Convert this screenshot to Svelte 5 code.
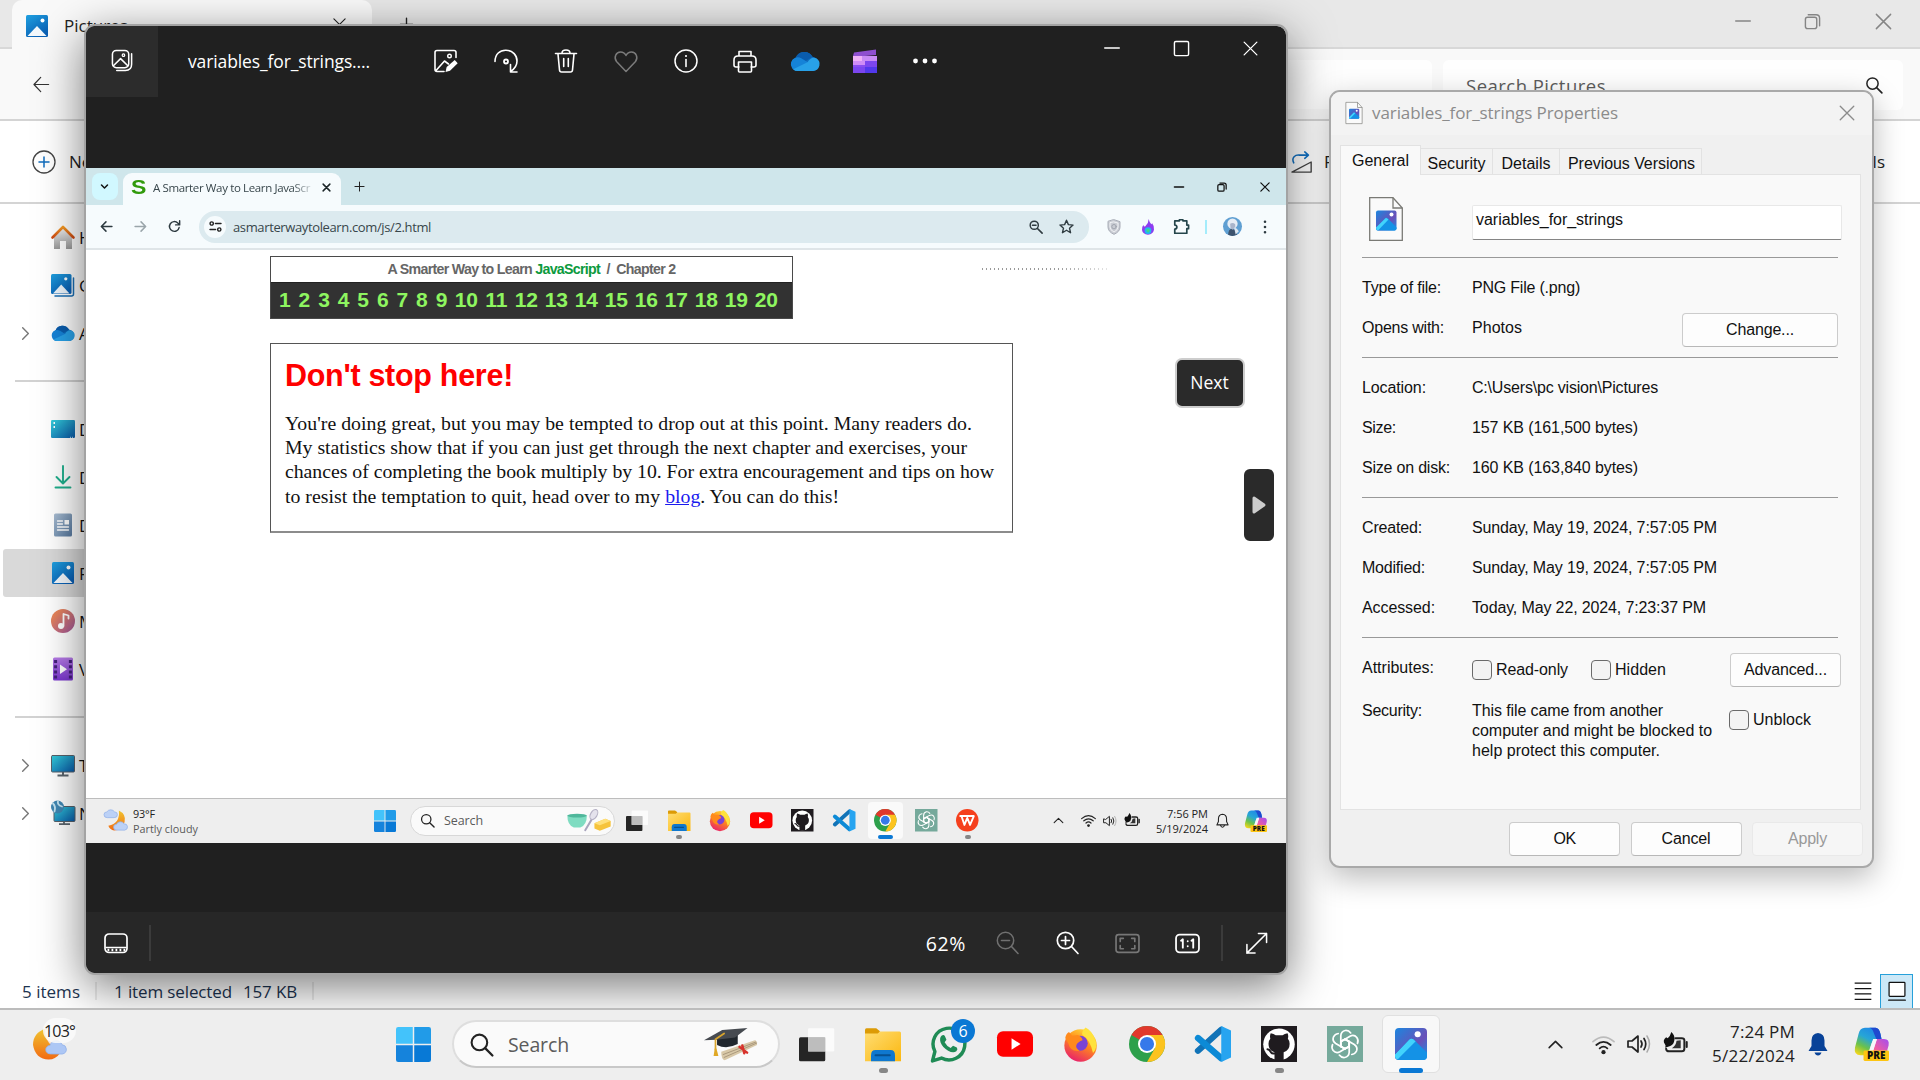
<script>
  // Spreads letter spacing so that a label takes its design width in any fallback font.
  function fit(node, width) {
    const range = document.createRange();
    range.selectNodeContents(node);
    const natural = range.getBoundingClientRect().width;
    const count = node.textContent.length;
    if (count > 0) node.style.letterSpacing = `${(width - natural) / count}px`;
  }

  const sidebar = [
    { icon: 'home', label: 'Home' },
    { icon: 'gallery', label: 'Gallery' },
    { icon: 'cloud', label: 'Aisha - Personal', expand: true },
    { rule: true },
    { icon: 'desktop', label: 'Desktop' },
    { icon: 'download', label: 'Downloads' },
    { icon: 'document', label: 'Documents' },
    { icon: 'picture', label: 'Pictures', active: true },
    { icon: 'music', label: 'Music' },
    { icon: 'video', label: 'Videos' },
    { rule: true },
    { icon: 'pc', label: 'This PC', expand: true },
    { icon: 'network', label: 'Network', expand: true }
  ];

  const photoTools = ['edit', 'rotate', 'trash', 'heart', 'info', 'print', 'cloud', 'clip', 'dots'];
  const chapters = Array.from({ length: 20 }, (_, i) => i + 1);
  const lessonLines = [
    { text: "You're doing great, but you may be tempted to drop out at this point. Many readers do.", width: 687 },
    { text: 'My statistics show that if you can just get through the next chapter and exercises, your', width: 682 },
    { text: 'chances of completing the book multiply by 10. For extra encouragement and tips on how', width: 709 }
  ];
  const innerApps = [
    { icon: 'taskview' },
    { icon: 'folder', open: true },
    { icon: 'firefox' },
    { icon: 'youtube' },
    { icon: 'github' },
    { icon: 'vscode' },
    { icon: 'chrome', active: true },
    { icon: 'gpt' },
    { icon: 'wps', open: true }
  ];
  const apps = [
    { icon: 'taskview' },
    { icon: 'folder', open: true },
    { icon: 'whatsapp', badge: '6' },
    { icon: 'youtube' },
    { icon: 'firefox' },
    { icon: 'chrome' },
    { icon: 'vscode' },
    { icon: 'github', open: true },
    { icon: 'gpt' },
    { icon: 'photos', active: true }
  ];
  const details = [
    [
      { label: 'Type of file:', lw: 79, value: 'PNG File (.png)', vw: 108 },
      { label: 'Opens with:', lw: 82, value: 'Photos', vw: 50, button: 'Change...' }
    ],
    [
      { label: 'Location:', lw: 64, value: 'C:\\Users\\pc vision\\Pictures', vw: 186 },
      { label: 'Size:', lw: 34, value: '157 KB (161,500 bytes)', vw: 166 },
      { label: 'Size on disk:', lw: 88, value: '160 KB (163,840 bytes)', vw: 166 }
    ],
    [
      { label: 'Created:', lw: 60, value: 'Sunday, May 19, 2024, 7:57:05 PM', vw: 245 },
      { label: 'Modified:', lw: 63, value: 'Sunday, May 19, 2024, 7:57:05 PM', vw: 245 },
      { label: 'Accessed:', lw: 73, value: 'Today, May 22, 2024, 7:23:37 PM', vw: 234 }
    ]
  ];
</script>

{#snippet icon(name, size = 24)}
  <svg class="icon" width={size} height={size} viewBox="0 0 24 24" fill="none" stroke-linecap="round" stroke-linejoin="round">
    {#if name === 'home'}
      <path d="M3 12 12 4l9 8v12h-6v-8H9v8H3z" fill="url(#g-grey)" />
      <path d="M1.500 12.500 12 2l10.500 10.500" stroke="url(#g-orange)" stroke-width="2.600" />
    {:else if name === 'gallery'}
      <path d="M22.500 5v16q0 2-2 2H4" stroke="#1a6fb5" stroke-width="1.500" />
      <rect x="0" y="1" width="20.500" height="20" rx="1.500" fill="url(#g-pic)" />
      <path d="M2 20.500 10.200 11.500 18.500 20.500z" fill="#eef6fc" />
      <circle cx="14.800" cy="5.800" r="1.600" fill="#fff" />
    {:else if name === 'picture'}
      <rect x="1" y="1" width="22" height="22" rx="1.500" fill="url(#g-pic)" />
      <path d="M2.500 22 12 12l9.500 10z" fill="#f3f8fc" />
      <circle cx="17.500" cy="6.500" r="2" fill="#fff" />
    {:else if name === 'cloud'}
      <path d="M6 20a5.500 5.500 0 0 1-1.500-10.500A7.500 7.500 0 0 1 18 8.500 6 6 0 0 1 19 20z" fill="#0f6cbd" />
      <path d="M4.500 9.500a7.500 7.500 0 0 1 13.500-1l-8 5z" fill="#0a5cad" />
      <path d="M6 20a5.500 5.500 0 1 1 3-10.200L16 14 6 20z" fill="#1583d8" />
      <path d="M2.500 18.500 14 13q3-5 7-3.200A5.500 5.500 0 0 1 18.500 20H6q-2 0-3.500-1.500z" fill="#28a1e8" />
    {:else if name === 'desktop'}
      <rect x="0" y="3" width="24" height="18" rx="1.200" fill="url(#g-teal)" />
      <path d="M2.500 6h1.500M2.500 10h1.500" stroke="#fff" stroke-width="2" stroke-linecap="butt" />
      <path d="M19 20.300h4" stroke="#bfe6f5" stroke-width="1" stroke-dasharray="1 1" stroke-linecap="butt" />
    {:else if name === 'download'}
      <path d="M12 1v17M5.500 12 12 18.500 18.500 12M4.500 22.500h15" stroke="#1fae8b" stroke-width="1.900" />
    {:else if name === 'document'}
      <rect x="3" y="0.500" width="18" height="23" rx="1.500" fill="url(#g-doc)" />
      <path d="M6.500 8h5M6.500 11h5M6.500 14h11M6.500 17h11" stroke="#fff" stroke-width="1.300" />
      <rect x="13.500" y="7" width="4.500" height="4.500" fill="#fff" />
    {:else if name === 'music'}
      <circle cx="12" cy="12" r="12" fill="url(#g-music)" />
      <circle cx="10" cy="17" r="3" fill="#fff" />
      <path d="M12.500 17V5l5 1.500v3" stroke="#fff" stroke-width="1.800" />
    {:else if name === 'video'}
      <rect x="2" y="0.500" width="20" height="23" rx="1.500" fill="url(#g-video)" />
      <path d="M4.600 3v19M19.400 3v19" stroke="#43207a" stroke-width="3" stroke-dasharray="3 2.200" stroke-linecap="butt" />
      <path d="M9 7.500v9.500l7-4.700z" fill="#fff" />
    {:else if name === 'pc'}
      <rect x="0.500" y="2.500" width="23" height="16.500" rx="1" fill="url(#g-teal)" stroke="#58616a" />
      <path d="M12 19v2.500M6.500 22.500h11" stroke="#5a646c" stroke-width="2" stroke-linecap="butt" />
    {:else if name === 'network'}
      <rect x="3" y="5.500" width="21" height="15" rx="1" fill="url(#g-teal)" stroke="#58616a" />
      <path d="M13 20v2.500M8 23.200h11" stroke="#5a646c" stroke-width="1.800" stroke-linecap="butt" />
      <circle cx="6.500" cy="6" r="6.500" fill="#3f87b3" />
      <path d="M2 2.500q3 3 1.500 8M7 0q-1 4 4 5.500" stroke="#c4e4f2" stroke-width="1.800" />
    {:else if name === 'back'}
      <path d="M21 12H3M11 3 2.500 12l8.500 9" stroke="#333" stroke-width="1.500" />
    {:else if name === 'chevron'}
      <path d="m8 4 8 8-8 8" stroke="#777" stroke-width="2" />
    {:else if name === 'up'}
      <path d="m4 16 8-8 8 8" stroke="#222" stroke-width="2" />
    {:else if name === 'newitem'}
      <circle cx="12" cy="12" r="11" stroke="#444" stroke-width="1.300" />
      <path d="M12 7v10M7 12h10" stroke="#0f6cbd" stroke-width="1.500" />
    {:else if name === 'x'}
      <path d="m3 3 18 18M21 3 3 21" stroke="currentColor" stroke-width="1.800" />
    {:else if name === 'xbold'}
      <path d="m3 3 18 18M21 3 3 21" stroke="#1c2528" stroke-width="4" />
    {:else if name === 'plus'}
      <path d="M12 2v20M2 12h20" stroke="currentColor" stroke-width="2.200" />
    {:else if name === 'min'}
      <path d="M1 12h22" stroke="currentColor" stroke-width="1.900" />
    {:else if name === 'max'}
      <rect x="2" y="2" width="20" height="20" rx="2" stroke="currentColor" stroke-width="2" />
    {:else if name === 'restore'}
      <rect x="2" y="6" width="16" height="16" rx="3" stroke="currentColor" stroke-width="2" />
      <path d="M6 2.500h11q5 0 5 5V18" stroke="currentColor" stroke-width="2" />
    {:else if name === 'cmin'}
      <path d="M1 12h22" stroke="#111" stroke-width="3.600" />
    {:else if name === 'crestore'}
      <rect x="2" y="6" width="15" height="16" rx="3" stroke="#111" stroke-width="3" />
      <path d="M7 2.500h10q5 0 5 5V17" stroke="#111" stroke-width="3" />
    {:else if name === 'cx'}
      <path d="m2 2 20 20M22 2 2 22" stroke="#111" stroke-width="2.900" />
    {:else if name === 'search'}
      <circle cx="10" cy="10" r="7.500" stroke="#222" stroke-width="2" />
      <path d="m15.500 15.500 7 7" stroke="#222" stroke-width="2.200" />
    {:else if name === 'zoomout'}
      <circle cx="10.500" cy="9.500" r="8.200" stroke="currentColor" stroke-width="1.500" />
      <path d="m16.500 15.500 6.500 7M6.500 9.500h8" stroke="currentColor" stroke-width="1.600" />
    {:else if name === 'czoom'}
      <circle cx="9" cy="9" r="7" stroke="currentColor" stroke-width="2.500" />
      <path d="m14.500 14.500 8 8M6 9h6" stroke="currentColor" stroke-width="2.800" />
    {:else if name === 'zoomin'}
      <circle cx="10.500" cy="9.500" r="8.200" stroke="currentColor" stroke-width="1.700" />
      <path d="m16.500 15.500 6.500 7M6.500 9.500h8M10.500 5.500v8" stroke="currentColor" stroke-width="1.700" />
    {:else if name === 'rotateimg'}
      <path d="M3 13C0 7 5 4 9 4.500h10M15 1l4 3.500L15 8" stroke="#1272c4" stroke-width="1.700" />
      <path d="M1 23 22 12v11z" stroke="#444" stroke-width="1.500" />
    {:else if name === 'photoset'}
      <rect x="1.500" y="1.500" width="17" height="18" rx="4" stroke="#fff" stroke-width="1.600" />
      <path d="M2.500 17.500 10 10l7.500 7.500M21.500 5v11q0 6.500-6.500 6.500H6" stroke="#fff" stroke-width="1.600" />
      <circle cx="13" cy="6.500" r="1.300" stroke="#fff" stroke-width="1.300" />
    {:else if name === 'edit'}
      <path d="M10 22.500H3q-2 0-2-2v-17q0-2 2-2h17q2 0 2 2v5M2 21.500l8.500-9.500 4 3" stroke="#fff" stroke-width="1.600" />
      <circle cx="15.500" cy="7" r="1.800" stroke="#fff" stroke-width="1.400" />
      <path d="m11.500 23 1.200-5 8-7 3 3.200-7.700 7.600z" fill="#fff" />
    {:else if name === 'rotate'}
      <path d="M1 12.500C1 5 6 1 12 1.200 19 1.500 23 6.500 23 12c0 4.500-2.500 8-6.500 10.500M16.500 15.500v7.500H23" stroke="#fff" stroke-width="1.600" />
      <circle cx="12" cy="12.500" r="2" stroke="#fff" stroke-width="1.800" />
    {:else if name === 'trash'}
      <path d="M1.500 4.500h21M8 4Q8 1 12 1t4 3M4 5l1.500 16q.200 2 2 2h9q1.800 0 2-2L20 5M9.700 9.500v8M14.300 9.500v8" stroke="#fff" stroke-width="1.600" />
    {:else if name === 'heart'}
      <path d="M12 22.500 2.500 12.500C-.5 8.500 2 3 6.500 3 9 3 11 4.500 12 6.500 13 4.500 15 3 17.500 3 22 3 24.500 8.500 21.500 12.500z" stroke="#7b7b7b" stroke-width="1.500" />
    {:else if name === 'info'}
      <circle cx="12" cy="12" r="11" stroke="#fff" stroke-width="1.500" />
      <path d="M12 10.500v7" stroke="#fff" stroke-width="1.600" />
      <circle cx="12" cy="7" r="1.100" fill="#fff" />
    {:else if name === 'print'}
      <path d="M6 7V2.500h12V7M6 18H3q-2 0-2-2v-5q0-4 4-4h14q4 0 4 4v5q0 2-2 2h-3M5.500 13h13v9q0 1-1 1h-11q-1 0-1-1z" stroke="#fff" stroke-width="1.600" />
    {:else if name === 'clip'}
      <path d="M0 7 1 3.500 23 .5v5.500L1 8z" fill="#8e4fd0" />
      <rect x="0" y="7" width="24" height="17" rx="1" fill="#8a4df0" />
      <path d="M0 7h24v5H0z" fill="#c88bf5" />
      <path d="M0 7h9v5H0z" fill="#efb1f7" />
      <path d="M0 12h12v4H0z" fill="#cf8df6" />
      <path d="M12 12h12v6H12zM0 18h12v6H0z" fill="#7c46ef" />
      <path d="M12 18h12v6H12z" fill="#5238ec" />
    {:else if name === 'dots'}
      <circle cx="2.500" cy="12" r="2.400" fill="#fff" />
      <circle cx="12" cy="12" r="2.400" fill="#fff" />
      <circle cx="21.500" cy="12" r="2.400" fill="#fff" />
    {:else if name === 'vdots'}
      <path d="M12 3v.1M12 12v.1M12 21v.1" stroke="#2d3a40" stroke-width="4.500" />
    {:else if name === 'down'}
      <path d="m4 8 8 8 8-8" stroke="#111" stroke-width="4" />
    {:else if name === 'cback'}
      <path d="M22 12H3M11 3.500 2.500 12l8.500 8.500" stroke="currentColor" stroke-width="2.800" />
    {:else if name === 'cforward'}
      <path d="M2 12h19M13 3.500l8.500 8.500-8.500 8.500" stroke="currentColor" stroke-width="2.800" />
    {:else if name === 'reload'}
      <path d="M20.500 14A9 9 0 1 1 18 5.500L21 8M21.500 1.500V9H14" stroke="#2d3a40" stroke-width="2.700" />
    {:else if name === 'tune'}
      <path d="M12 6.500h10M2 17.500h10" stroke="#222" stroke-width="3" />
      <circle cx="5" cy="6.500" r="3" stroke="#222" stroke-width="2.600" />
      <circle cx="19" cy="17.500" r="3" stroke="#222" stroke-width="2.600" />
    {:else if name === 'star'}
      <path d="m12 2 3 7 7.500.700-5.700 5 1.700 7.300-6.500-4-6.500 4 1.700-7.300-5.700-5L9 9z" stroke="#2f3b40" stroke-width="2.200" />
    {:else if name === 'shield'}
      <path d="M12 1 21 4v8q0 7-9 11-9-4-9-11V4z" fill="#c9ccd3" stroke="#a9adb7" stroke-width="1.500" />
      <path d="M12 4.500 18 6v6q0 4.500-6 7.500-6-3-6-7.500V6z" stroke="#f6f7f9" stroke-width="1.300" />
      <circle cx="12" cy="11.500" r="3.300" stroke="#9da1ab" stroke-width="1.400" />
    {:else if name === 'flame'}
      <path d="M13 0q1 5 4 8 1 0 1-2 4 5 3 10-1.500 7-9 7.500Q4 23 3 16.500 2.500 12 5 9q1 3 3 2 5-5 5-11z" fill="#8d3df0" />
      <circle cx="12" cy="17.500" r="5" fill="#24b7ee" />
      <path d="M10 15q3-1 5 1l-2 4q-4 0-3-5z" fill="#3ddc84" />
    {:else if name === 'puzzle'}
      <path d="M2.500 4H9V2.500h5V4h5.500v6H22v5h-2.500v6.500h-17v-6q3 0 3-2.800t-3-2.700z" stroke="#24454b" stroke-width="2.400" />
    {:else if name === 'avatar'}
      <circle cx="12" cy="12" r="12" fill="#5f9fd2" />
      <circle cx="12" cy="8.500" r="6.500" fill="#e6edf5" />
      <path d="M6.500 22.500Q7 14 12 15t6 7q-6 3.500-11.500.5z" fill="#3d536e" />
      <path d="M9 8.500q4-2 6.500 1v4L12 16l-2.500-2z" fill="#a9b5cb" />
      <path d="M14 13q4 1 6 5l-4 4z" fill="#dfe8f2" />
    {:else if name === 'weather'}
      <path d="M15.500 1.500q8 4 6 12-2.500 8.500-11 9-4-.5-6-5Q17 15 15.500 1.500z" fill="url(#g-moon)" />
      <path d="M3 9a3 3 0 0 1 0-6 4.800 4.800 0 0 1 8 0 3 3 0 0 1 0 6z" fill="#bcd1f6" stroke="#93b2ea" stroke-width=".8" />
      <path d="M13 22a3 3 0 0 1 0-6 4.500 4.500 0 0 1 8-.500A3.300 3.300 0 0 1 22 22z" fill="#bcd1f6" stroke="#93b2ea" stroke-width=".8" />
    {:else if name === 'moon'}
      <path d="M9 1C3 3 0 7 0 12.500 1 19 5 23 11 23q5 0 8.500-5L13 5z" fill="url(#g-moon)" />
      <path d="M8.500 1.500q7.500 2.500 12 12L14 14Q8 9 8.500 1.500z" fill="#fbe3cf" />
      <path d="M12 19a3 3 0 0 1 0-6 4.500 4.500 0 0 1 8.500-.500A3.300 3.300 0 0 1 21 19z" fill="#adc7f5" stroke="#93b2ea" stroke-width=".6" />
    {:else if name === 'start'}
      <path d="M1.500 0H11.500V11.500H0V1.500Q0 0 1.500 0z" fill="#43c3fb" />
      <path d="M12.500 0h10Q24 0 24 1.500v10H12.500z" fill="#219be8" />
      <path d="M0 12.500h11.500V24h-10Q0 24 0 22.500z" fill="#1583dc" />
      <path d="M12.500 12.500H24v10q0 1.500-1.500 1.500h-10z" fill="#0879d6" />
    {:else if name === 'taskview'}
      <rect x="0" y="7.500" width="17.500" height="16" rx="1" fill="#252525" />
      <rect x="6" y="1.500" width="17.500" height="15.500" rx=".8" fill="#fff" fill-opacity=".75" />
      <path d="M6 7.500h11.500v9.500H6z" fill="#bdbdbd" />
    {:else if name === 'folder'}
      <path d="M0 2.500q0-1 1-1h6.500l2.500 2-2 3.500H0z" fill="#dc9b06" />
      <path d="M0 5h8.500l1.500-1.300h13q1 0 1 1V23.500H0z" fill="url(#g-folder)" />
      <path d="M4 23.500v-4Q4 16 7 16h10q3 0 3 3.500v4z" fill="#0f78cf" />
      <path d="M7 19.500h9.500" stroke="#075091" stroke-width="1.300" />
    {:else if name === 'firefox'}
      <circle cx="11.700" cy="13" r="10.800" fill="url(#g-fox)" />
      <path d="M15 1q4 2 6 7 3 6-1 10-2-9-7-12-1-2 2-5z" fill="#ffe23d" />
      <circle cx="11.500" cy="11.500" r="5" fill="#7a43d6" />
      <path d="M1.500 8Q2 5 4 4l2 2.500 4-.5q3 1.500 3 3.500-3 1-4 3-1 2 2 4-6 1-7.500-5z" fill="#ff8a1c" />
    {:else if name === 'youtube'}
      <rect x="0" y="3.500" width="24" height="17" rx="4" fill="#f00" />
      <path d="M9.700 8.200v7.600l6-3.800z" fill="#fff" />
    {:else if name === 'github'}
      <path d="M0 0h24v24H0z" fill="#1f1b1f" />
      <circle cx="12" cy="12.200" r="10.500" fill="#fff" />
      <path d="M9 23V17.500q-4-1.300-4-5.700 0-2 1.200-3.300-.5-2 .3-3.700 2 .2 3.300 1.300h4.600Q15.700 5 17.700 4.800q.8 1.700.2 3.700 1.200 1.300 1.200 3.300 0 4.400-4 5.700v5.500z" fill="#1f1b1f" />
      <path d="M4.300 15.500q1.300 0 2 1.500.900 1.700 2.700 1.300" stroke="#1f1b1f" stroke-width="1.300" />
    {:else if name === 'vscode'}
      <path d="m2 16.500 15.500-14" stroke="#1173b7" stroke-width="4.200" />
      <path d="m2 8 15.500 13.500" stroke="#0c8ad6" stroke-width="4.200" />
      <path d="M17.500 0 24 3v18l-6.500 3z" fill="#27a4f0" />
    {:else if name === 'chrome'}
      <circle cx="12" cy="12" r="12" fill="#2da04b" />
      <path d="M12 12 1.600 6A12 12 0 0 1 22.400 6z" fill="#e1382c" />
      <path d="M12 6h10.400A12 12 0 0 1 12 24l5.200-9z" fill="#fcc31e" />
      <circle cx="12" cy="12" r="6" fill="#fff" />
      <circle cx="12" cy="12" r="4.700" fill="#3579ea" />
    {:else if name === 'gpt'}
      <path d="M0 0h24v24H0z" fill="#75a99b" />
      {#each [0, 60, 120, 180, 240, 300] as turn}
        <path d="M12 8.800 9.200 10.400V6.500q.2-3 3-3.500 2.300-.2 3.600 1.600M9.200 10.400v3.200l2.800 1.600" transform="rotate({turn} 12 12)" stroke="#fff" stroke-width="1.150" />
      {/each}
    {:else if name === 'wps'}
      <circle cx="12" cy="12" r="12" fill="#f5401d" />
      <path d="M4.500 7.500h10M6 8l3 9 3-7.500 3 7.500 4-9.500h-3.500" stroke="#fff" stroke-width="2" />
    {:else if name === 'whatsapp'}
      <path d="M1 23.300 2.600 17A10.600 10.600 0 1 1 7 21.400z" stroke="#1f8b55" stroke-width="2.300" />
      <path d="M7 6.500q1.500-1 2.300.300l1 2.400-1.200 1.700q1.300 2.600 4 3.800l1.600-1.500 2.500 1.200q1 1-.3 2.400-2 1.600-5.500-.3-3.600-2-5-5.500-.900-3 .6-4.500z" fill="#1f8b55" />
    {:else if name === 'photos'}
      <rect x="0" y="0" width="24" height="24" rx="3" fill="url(#g-photos)" />
      <path d="M0 20 10.500 9q2-2 4 0L24 18.500V21q0 3-3 3H3q-3 0-3-3z" fill="#1492e6" />
      <path d="M2 23.500Q0 23 0 20L10.500 9q2-2 4.500.500-1.500-.500-3 1z" fill="#42d3fc" />
      <path d="M2 23.500 14 11.500l1.500-1.500-3.500-2L0 20q0 2.500 2 3.500z" fill="#42d3fc" />
      <circle cx="17" cy="4.700" r="2.300" fill="#fff" />
    {:else if name === 'cap'}
      <path d="M6.800 9v3.500q5 2.500 10.800-.500V6.500z" fill="#20262c" />
      <path d="M0 10 9.500 4.700 22.700 3.700 16.200 8.600 6.500 9.800z" fill="#464a50" />
      <path d="M10.500 6.500 6 9.500V15" stroke="#d9a42c" stroke-width=".9" />
      <path d="m5 18.300.600-4h.9l1 4z" fill="#e0a825" />
      <path d="m9 16 17.500-6q1.200 0 1.200 2.500L10.800 20.500Q9 20 9 16z" fill="#d8c8a8" />
      <path d="m10 17.500 17-6.500M10.500 19l17-7.500" stroke="#a8977a" stroke-width=".5" />
      <path d="m18.500 13.500 4 3M20 12.800l1 4" stroke="#d8322c" stroke-width="1.300" />
    {:else if name === 'baking'}
      <path d="M-8 7H10q0 9-6 11H-2q-6-2-6-11z" fill="#7fdcc1" />
      <ellipse cx="1" cy="7" rx="9" ry="1.800" fill="#4fb79b" />
      <path d="m8.500 20.500 6-10" stroke="#a9a4bd" stroke-width="1.800" />
      <ellipse cx="16.500" cy="6" rx="3" ry="5" transform="rotate(30 16.500 6)" fill="#e4e2ec" stroke="#b4b0c4" />
      <path d="m17 14 10-4 5 2v5l-10 4-5-2z" fill="#f6c33c" />
      <path d="m17 14 10-4 5 2-10 4z" fill="#ffe07a" />
    {:else if name === 'wifi' || name === 'wifidim'}
      <path d="M1 9q11-9.500 22 0" stroke={name === 'wifidim' ? '#bbb' : '#222'} stroke-width="1.800" />
      <path d="M4.500 12.500q7.500-6.500 15 0M8 16q4-3.500 8 0" stroke="#222" stroke-width="1.900" />
      <circle cx="12" cy="20" r="2.200" fill="#222" />
    {:else if name === 'speaker'}
      <path d="M1 9v6h4l6 5V4L5 9zM14 9q2 3 0 6M17 6.500q3.500 5.500 0 11" stroke="#222" stroke-width="1.700" />
      <path d="M20 4q5 8 0 16" stroke="#aaa" stroke-width="1.500" />
    {:else if name === 'battery'}
      <path d="M12 6h6q2.500 0 2.500 2v8q0 2.500-2.500 2.500H6q-3 0-3-2.500M22.800 9.500v5" stroke="#222" stroke-width="1.900" />
      <path d="M8 0q3.500 3 3 7.500-.5 4.500-4 6L2 15Q3 13 2 12-1 8 3 5l1.500 1Q7 4 8 0z" fill="#111" />
      <path d="M8.500 15.500q4-2 4.500-7l4-.500v7.500z" fill="#333" />
    {:else if name === 'bell'}
      <path d="M12 1q6.500.5 6.500 7.500v5.500l3 5h-19l3-5V8.500Q5.500 1.500 12 1z" fill="#084298" />
      <path d="M8.500 20.500h7q-1 3-3.500 3t-3.500-3z" fill="#084298" />
    {:else if name === 'bellline'}
      <path d="M12 2q6.500.5 6.500 7.500v4l2.500 5.500H3l2.500-5.500v-4Q5.500 2.500 12 2zM9 20.500q3 4.500 6 0" stroke="#222" stroke-width="1.700" />
    {:else if name === 'copilot'}
      <path d="M7 .5h7.500q2.500 0 3.500 4.500l.700 3.500h-4q-2.200 0-3 3L9.500 18q-.8 2-3.500 2H4q-5 0-4-5.500L2.500 5Q3.500.5 7 .5z" fill="url(#g-co1)" />
      <path d="M14.500 .5q2.500 0 3.500 4.500l.7 3.500h-3.700l-2-5Q12.500 1 10 .5z" fill="#1f49cf" />
      <path d="M15.500 8.500h5q4 0 3.200 4.500L22 19q-1 4-5 4H8.500q2.500-1 3.500-4.500z" fill="url(#g-co2)" />
      <path d="m12.800 8.500-2.800 9h2.700l2.800-9z" fill="#f6f6fa" />
      <rect x="6" y="16.500" width="18" height="7.500" rx="1" fill="#fdc512" />
      <text x="15" y="22.600" text-anchor="middle" class="pre">PRE</text>
    {:else if name === 'strip'}
      <rect x="1" y="3" width="22" height="18.500" rx="4" stroke="#fff" stroke-width="1.700" />
      <path d="M2 16.500h20" stroke="#fff" stroke-width="1.300" />
      <path d="M3.500 19h18" stroke="#fff" stroke-width="2.500" stroke-dasharray="1.800 2.200" stroke-linecap="butt" />
    {:else if name === 'fitview'}
      <rect x="1" y="3.500" width="22" height="17" rx="2.500" stroke="#777" stroke-width="1.600" />
      <path d="M8 7H5v3M16 7h3v3M8 17H5v-3M16 17h3v-3" stroke="#777" stroke-width="1.600" />
    {:else if name === 'actual'}
      <rect x="1" y="3.500" width="22" height="17" rx="3.500" stroke="#fff" stroke-width="1.700" />
      <path d="m5.800 9.300 1.700-1.300v8M15.800 9.300l1.700-1.300v8M12.200 9.800v.1M12.200 14.500v.1" stroke="#fff" stroke-width="1.800" />
    {:else if name === 'expand'}
      <path d="M2 22 22.500 1.500M14 1.500h8.500V11M2 13v9h8.500" stroke="#fff" stroke-width="1.600" />
    {:else if name === 'rows'}
      <path d="M2 2.500h20M2 9h20M2 15.500h20M2 22h20" stroke="#111" stroke-width="1.500" stroke-linecap="butt" />
    {:else if name === 'tiles'}
      <rect x="2.500" y="1.500" width="19" height="17" rx="1" stroke="#111" stroke-width="1.500" fill="#fff" />
      <path d="M2 23h20" stroke="#111" stroke-width="1.500" />
    {/if}
  </svg>
{/snippet}

{#snippet fileIcon(width, height)}
  <svg class="icon" {width} {height} viewBox="0 0 34 44" fill="none">
    <path d="M.7.700H24L33.300 11v32.300H.7z" fill="#fafafa" stroke="#7a7a75" stroke-width="1.300" />
    <path d="M24 .700V11h9.300" stroke="#7a7a75" stroke-width="1.300" />
    <rect x="7" y="13.500" width="20.500" height="20" rx="2" fill="url(#g-photos)" />
    <path d="M7 31 16 21.500q1.500-1.500 3 0l8.500 9v1q0 2-2 2H9q-2 0-2-2.500z" fill="#1492e6" />
    <path d="m9 33.500 10.500-11-2.500-1.800L7 30.500q-.200 2.500 2 3z" fill="#42d3fc" />
    <circle cx="22.500" cy="17.500" r="2" fill="#fff" />
  </svg>
{/snippet}

<svg class="defs" width="0" height="0">
  <defs>
    <linearGradient id="g-pic" x1="0" y1="0" x2="0.600" y2="1"><stop offset="0" stop-color="#1fa0e0" /><stop offset="1" stop-color="#0a5fb4" /></linearGradient>
    <linearGradient id="g-grey" x1="0" y1="0" x2="0" y2="1"><stop offset="0" stop-color="#eee" /><stop offset="1" stop-color="#999" /></linearGradient>
    <linearGradient id="g-orange" x1="0" y1="0" x2="0" y2="1"><stop offset="0" stop-color="#f59a23" /><stop offset="1" stop-color="#cf4a12" /></linearGradient>
    <linearGradient id="g-teal" x1="0" y1="0" x2="1" y2="1"><stop offset="0" stop-color="#34cfdc" /><stop offset="1" stop-color="#0a58a8" /></linearGradient>
    <linearGradient id="g-doc" x1="0" y1="0" x2="1" y2="1"><stop offset="0" stop-color="#a9bdd2" /><stop offset="1" stop-color="#57799f" /></linearGradient>
    <linearGradient id="g-music" x1="0" y1="0" x2="1" y2="1"><stop offset="0.200" stop-color="#e7835a" /><stop offset="1" stop-color="#a0569f" /></linearGradient>
    <linearGradient id="g-video" x1="0" y1="0" x2="0" y2="1"><stop offset="0" stop-color="#b57ae6" /><stop offset="1" stop-color="#7a35cf" /></linearGradient>
    <linearGradient id="g-folder" x1="0" y1="0" x2="1" y2="1"><stop offset="0" stop-color="#ffdd73" /><stop offset="1" stop-color="#fbb70f" /></linearGradient>
    <linearGradient id="g-moon" x1="0" y1="0" x2="0" y2="1"><stop offset="0" stop-color="#f0c531" /><stop offset="1" stop-color="#f26a12" /></linearGradient>
    <linearGradient id="g-fox" x1="0.800" y1="0" x2="0.300" y2="1"><stop offset="0" stop-color="#ffe23d" /><stop offset="0.450" stop-color="#ff8a1c" /><stop offset="1" stop-color="#e81f6d" /></linearGradient>
    <linearGradient id="g-photos" x1="0" y1="0" x2="1" y2="1"><stop offset="0" stop-color="#1b86df" /><stop offset="0.600" stop-color="#6a50b8" /><stop offset="1" stop-color="#1492e6" /></linearGradient>
    <linearGradient id="g-co1" x1="0.700" y1="0" x2="0.200" y2="1"><stop offset="0" stop-color="#1f86e8" /><stop offset="0.400" stop-color="#27a6d6" /><stop offset="0.700" stop-color="#6cc24a" /><stop offset="1" stop-color="#f2d61c" /></linearGradient>
    <linearGradient id="g-co2" x1="1" y1="0" x2="0" y2="1"><stop offset="0" stop-color="#a24df2" /><stop offset="0.500" stop-color="#ec5ca5" /><stop offset="1" stop-color="#ff8b4a" /></linearGradient>
  </defs>
</svg>

<div class="screen">
  <section class="explorer">
    <header class="tabs">
      <div class="tab">
        {@render icon('picture', 24)}
        <span class="tab-name" use:fit={64}>Pictures</span>
        <span class="tab-close">{@render icon('x', 15)}</span>
      </div>
      <span class="tab-add">{@render icon('plus', 15)}</span>
      <div class="win-controls">
        <span>{@render icon('min', 16)}</span>
        <span>{@render icon('restore', 17)}</span>
        <span>{@render icon('x', 19)}</span>
      </div>
    </header>
    <nav class="address-row">
      <span class="back">{@render icon('back', 19)}</span>
      <div class="address"></div>
      <div class="search-box">
        <span use:fit={140}>Search Pictures</span>
        {@render icon('search', 18)}
      </div>
    </nav>
    <div class="commands">
      <span class="new">{@render icon('newitem', 24)}<span>New</span></span>
      <span class="rotate-right">{@render icon('rotateimg', 22)}<span>Rotate right</span></span>
      <span class="details-cmd">Details</span>
    </div>
    <aside class="side">
      {#each sidebar as item}
        {#if item.rule}
          <div class="side-rule"></div>
        {:else}
          <div class="side-item" class:active={item.active}>
            <span class="caret">{#if item.expand}{@render icon('chevron', 17)}{/if}</span>
            {@render icon(item.icon, 24)}
            <span class="side-label">{item.label}</span>
          </div>
        {/if}
      {/each}
    </aside>
    <footer class="status">
      <span class="st" use:fit={58}>5 items</span>
      <i></i>
      <span class="st" use:fit={118}>1 item selected</span>
      <span class="st kb" use:fit={54}>157 KB</span>
      <i></i>
      <span class="view list">{@render icon('rows', 20)}</span>
      <span class="view current">{@render icon('tiles', 20)}</span>
    </footer>
  </section>

  <section class="photos">
    <header class="p-head">
      <span class="p-app">{@render icon('photoset', 23)}</span>
      <span class="p-title"><span use:fit={182}>variables_for_strings....</span></span>
      <div class="p-tools">
        {#each photoTools as tool}
          <span>{@render icon(tool, tool === 'cloud' ? 30 : 24)}</span>
        {/each}
      </div>
      <div class="p-controls">
        <span>{@render icon('min', 16)}</span>
        <span>{@render icon('max', 17)}</span>
        <span>{@render icon('x', 17)}</span>
      </div>
    </header>

    <div class="shot">
      <div class="c-tabs">
        <span class="c-drop">{@render icon('down', 9)}</span>
        <div class="c-tab">
          <b>S</b>
          <span class="c-title"><span use:fit={157}>A Smarter Way to Learn JavaScr</span></span>
          {@render icon('xbold', 9)}
        </div>
        <span class="c-add">{@render icon('plus', 11)}</span>
        <div class="c-controls">
          <span>{@render icon('cmin', 10)}</span>
          <span>{@render icon('crestore', 10)}</span>
          <span>{@render icon('cx', 10)}</span>
        </div>
      </div>
      <div class="c-bar">
        <span class="c-nav">{@render icon('cback', 13)}</span>
        <span class="c-nav dim">{@render icon('cforward', 13)}</span>
        <span class="c-nav">{@render icon('reload', 13)}</span>
        <div class="c-url">
          <span class="c-tune">{@render icon('tune', 13)}</span>
          <span use:fit={198}>asmarterwaytolearn.com/js/2.html</span>
          <span class="c-url-icon first">{@render icon('czoom', 14)}</span>
          <span class="c-url-icon">{@render icon('star', 15)}</span>
        </div>
        <div class="c-ext">
          <span>{@render icon('shield', 16)}</span>
          <span>{@render icon('flame', 16)}</span>
          <span>{@render icon('puzzle', 17)}</span>
          <i></i>
          <span>{@render icon('avatar', 19)}</span>
          <span>{@render icon('vdots', 14)}</span>
        </div>
      </div>
      <div class="page">
        <div class="course">
          <div class="course-title"><span use:fit={288}>A Smarter Way to Learn <em>JavaScript</em> &nbsp;/&nbsp; Chapter 2</span></div>
          <div class="chapters">
            {#each chapters as n}<span class:two={n > 9}>{n}</span>{/each}
          </div>
        </div>
        <div class="dotted"></div>
        <div class="next">Next</div>
        <div class="slide"><svg class="icon" width="14" height="18" viewBox="0 0 14 18"><path d="M2 2v14l10-7z" fill="#ccc" stroke="#ccc" stroke-width="3" stroke-linejoin="round" /></svg></div>
        <article class="notice">
          <h1><span use:fit={228}>Don't stop here!</span></h1>
          {#each lessonLines as line}
            <p><span use:fit={line.width}>{line.text}</span></p>
          {/each}
          <p><span use:fit={554}>to resist the temptation to quit, head over to my <u>blog</u>. You can do this!</span></p>
        </article>
      </div>
      <div class="t-bar">
        <span class="t-weather">{@render icon('weather', 23)}</span>
        <span class="t-temp"><span use:fit={22}>93°F</span><span class="soft" use:fit={65}>Partly cloudy</span></span>
        <span class="t-start">{@render icon('start', 22)}</span>
        <div class="t-search">
          {@render icon('search', 15)}<span use:fit={39}>Search</span>
          <span class="t-bake">{@render icon('baking', 26)}</span>
        </div>
        <div class="t-apps">
          {#each innerApps as app}
            <span class:open={app.open} class:active={app.active}>{@render icon(app.icon, 22.5)}</span>
          {/each}
        </div>
        <div class="t-tray">
          <span class="t-up">{@render icon('up', 13)}</span>
          <span>{@render icon('wifi', 15)}</span>
          <span>{@render icon('speaker', 14)}</span>
          <span>{@render icon('battery', 16)}</span>
          <span class="t-clock"><span use:fit={41}>7:56 PM</span><span use:fit={52}>5/19/2024</span></span>
          <span class="t-bell">{@render icon('bellline', 15)}</span>
          <span class="t-co">{@render icon('copilot', 22)}</span>
        </div>
      </div>
    </div>

    <footer class="p-foot">
      <span class="f-strip">{@render icon('strip', 24)}</span>
      <i></i>
      <span class="f-pct"><span use:fit={40}>62%</span></span>
      <span class="f-cell dim">{@render icon('zoomout', 24)}</span>
      <span class="f-cell">{@render icon('zoomin', 24)}</span>
      <span class="f-cell">{@render icon('fitview', 25)}</span>
      <span class="f-cell">{@render icon('actual', 25)}</span>
      <i></i>
      <span class="f-full">{@render icon('expand', 23)}</span>
    </footer>
  </section>

  <section class="dialog">
    <header class="d-head">
      {@render fileIcon(18, 22)}
      <span use:fit={246}>variables_for_strings Properties</span>
      <span class="d-close">{@render icon('x', 18)}</span>
    </header>
    <div class="d-tabs">
      <span class="on"><span use:fit={57}>General</span></span>
      <span class="d-sec"><span use:fit={58}>Security</span></span>
      <span class="d-det"><span use:fit={49}>Details</span></span>
      <span class="d-prev"><span use:fit={127}>Previous Versions</span></span>
    </div>
    <div class="d-panel">
      <div class="d-file">
        {@render fileIcon(34, 44)}
        <div class="d-input"><span use:fit={147}>variables_for_strings</span></div>
      </div>
      {#each details as group}
        <div class="d-group">
          {#each group as row}
            <div class="d-row">
              <span class="k"><span use:fit={row.lw}>{row.label}</span></span>
              <span use:fit={row.vw}>{row.value}</span>
              {#if row.button}<span class="btn change"><span use:fit={68}>{row.button}</span></span>{/if}
            </div>
          {/each}
        </div>
      {/each}
      <div class="d-group">
        <div class="d-attr">
          <span class="k"><span use:fit={72}>Attributes:</span></span>
          <span class="check"><i></i><span use:fit={72}>Read-only</span></span>
          <span class="check hid"><i></i><span use:fit={51}>Hidden</span></span>
          <span class="btn adv"><span use:fit={83}>Advanced...</span></span>
        </div>
        <div class="d-attr sec">
          <span class="k"><span use:fit={60}>Security:</span></span>
          <div class="note">
            <span use:fit={191}>This file came from another</span>
            <span use:fit={240}>computer and might be blocked to</span>
            <span use:fit={188}>help protect this computer.</span>
          </div>
          <span class="check unblock"><i></i><span use:fit={58}>Unblock</span></span>
        </div>
      </div>
    </div>
    <footer class="d-foot">
      <span class="btn"><span use:fit={22}>OK</span></span>
      <span class="btn"><span use:fit={49}>Cancel</span></span>
      <span class="btn off"><span use:fit={39}>Apply</span></span>
    </footer>
  </section>

  <section class="taskbar">
    <div class="w">
      {@render icon('moon', 34)}
      <span class="w-temp"><span use:fit={31}>103°</span></span>
    </div>
    <span class="start">{@render icon('start', 35)}</span>
    <div class="search">
      {@render icon('search', 25)}<span use:fit={61}>Search</span>
      <span class="cap">{@render icon('cap', 46)}</span>
    </div>
    <div class="apps">
      {#each apps as app}
        <span class:open={app.open} class:active={app.active}>
          {@render icon(app.icon, app.icon === 'photos' ? 32 : 36)}
          {#if app.badge}<b class="badge">{app.badge}</b>{/if}
        </span>
      {/each}
    </div>
    <div class="tray">
      <span class="tr-up">{@render icon('up', 19)}</span>
      <span class="tr">{@render icon('wifidim', 23)}</span>
      <span class="tr">{@render icon('speaker', 24)}</span>
      <span class="tr">{@render icon('battery', 25)}</span>
      <span class="clock"><span use:fit={65}>7:24 PM</span><span use:fit={83}>5/22/2024</span></span>
      <span class="bell">{@render icon('bell', 24)}</span>
      <span class="co">{@render icon('copilot', 34)}</span>
    </div>
  </section>
</div>

<style>
  :global(body) { margin: 0; overflow: hidden; }
  .screen { position: relative; width: 1920px; height: 1080px; overflow: hidden; background: #fff; font-family: 'Open Sans', 'Noto Sans', sans-serif; color: #222; white-space: nowrap; }
  .screen * { box-sizing: border-box; }
  .defs { position: absolute; }
  .icon { display: block; flex: none; overflow: visible; }
  .pre { font: 800 7px 'Open Sans', sans-serif; fill: #111; }

  /* File Explorer */
  .explorer { display: flex; flex-direction: column; height: 1009px; background: #fff; }
  .tabs { display: flex; height: 49px; background: #e8e8e8; border-bottom: 2px solid #d8d8d8; }
  .tab { display: flex; align-items: center; width: 360px; height: 49px; margin-left: 12px; padding: 2px 25px 0 13px; background: #f9f9f9; border-radius: 10px 10px 0 0; }
  .tab-name { margin-left: 15px; font-size: 17px; }
  .tab-close { margin: -3px 0 0 auto; }
  .tab-add { margin: 16.500px 0 0 27px; }
  .win-controls { display: flex; margin-left: auto; padding-bottom: 5px; color: #858585; }
  .win-controls span { display: grid; place-items: center; width: 70px; }
  .win-controls span:first-child { width: 69px; }
  .win-controls span:last-child { width: 73px; }
  .address-row { display: flex; height: 72px; padding-top: 11px; background: #f9f9f9; border-bottom: 2px solid #d4d4d4; }
  .back { width: 100px; padding: 15px 0 0 32px; }
  .address { width: 1332px; height: 49px; background: #fefefe; border-radius: 6px; }
  .search-box { display: flex; align-items: center; justify-content: space-between; width: 460px; height: 50px; margin-left: 11px; padding: 0 20px 0 23px; background: #fefefe; border-radius: 6px; font-size: 18.500px; color: #5c5c5c; }
  .commands { display: flex; align-items: center; height: 83px; border-bottom: 2px solid #d4d4d4; font-size: 17px; }
  .new { display: flex; align-items: center; gap: 13px; width: 1291px; padding-left: 32px; }
  .rotate-right { display: flex; align-items: center; gap: 11px; width: 533px; }
  .details-cmd { width: 61px; text-align: right; }
  .side { width: 330px; padding: 9px 0 0 3px; flex: 1; }
  .side-item { display: flex; align-items: center; height: 48px; border-radius: 3px; }
  .side-item.active { background: #d9d9d9; }
  .caret { width: 48px; padding-left: 14px; }
  .side-label { margin-left: 4px; font-size: 17px; color: #111; }
  .side-rule { height: 2px; margin: 23px 0 23px 12px; background: #d2d2d2; }
  .status { display: flex; align-items: center; height: 36px; padding-left: 22px; font-size: 17px; color: #1c3350; }
  .status i { width: 2px; height: 18px; margin: 0 17px 0 15px; background: #ddd; opacity: .6; }
  .st.kb { margin-left: 11px; }
  .view { display: grid; place-items: center; width: 33px; height: 35px; }
  .view.list { margin-left: auto; margin-right: 1px; }
  .view.current { margin-right: 7px; background: #cce8f7; border: 1px solid #26a0da; }

  /* Photos window */
  .photos { position: absolute; left: 84px; top: 24px; width: 1204px; height: 951px; display: flex; flex-direction: column; background: #202020; border: 2px solid #a3a3a3; border-radius: 11px; background-clip: padding-box; box-shadow: 0 12px 46px rgba(0, 0, 0, .52); overflow: hidden; color: #fff; }
  .p-head { display: flex; height: 142px; }
  .p-app { display: grid; place-items: center; width: 72px; height: 71px; background: #2c2c2c; padding-bottom: 3px; }
  .p-title { width: 258px; padding: 23px 0 0 30px; font-size: 17.500px; line-height: 25px; }
  .p-tools { display: flex; height: 71px; padding-bottom: 1px; }
  .p-tools span { display: grid; place-items: center; width: 59.900px; }
  .p-controls { display: flex; height: 44px; margin: 0 1px 0 auto; }
  .p-controls span { display: grid; place-items: center; width: 69.300px; }

  .shot { display: flex; flex-direction: column; height: 675px; background: #fff; color: #222; }
  .c-tabs { display: flex; height: 37px; background: #cfe6eb; }
  .c-drop { display: grid; place-items: center; width: 26px; height: 27px; margin: 5px 0 0 6px; padding-right: 1px; background: #d1f8ff; border-radius: 8px; }
  .c-tab { display: flex; align-items: center; width: 218px; height: 32px; margin: 5px 0 0 5px; padding: 0 10px 4px 8px; background: #f6fbfd; border-radius: 9px 9px 0 0; }
  .c-tab b { width: 22px; font: bold 21px 'Liberation Sans', Arial, sans-serif; color: #319a0c; transform: scaleX(1.1); transform-origin: left; }
  .c-title { width: 158px; margin-right: 11px; font-size: 11.500px; color: #38464b; -webkit-mask-image: linear-gradient(90deg, #000 88%, rgba(0, 0, 0, .2)); mask-image: linear-gradient(90deg, #000 88%, rgba(0, 0, 0, .2)); }
  .c-add { margin: 13px 0 0 13px; }
  .c-controls { display: flex; margin-left: auto; color: #111; }
  .c-controls span { display: grid; place-items: center; width: 43px; }
  .c-bar { display: flex; align-items: center; height: 45px; background: #f6fbfd; border-bottom: 2px solid #dfe5e8; }
  .c-nav { display: grid; place-items: center; width: 34px; color: #2d3a40; }
  .c-nav:first-child { margin-left: 3px; }
  .c-nav.dim { color: #9aa5aa; }
  .c-url { display: flex; align-items: center; width: 890px; height: 32px; margin-left: 8px; padding: 0 8px 0 5px; background: #dceaef; border-radius: 16px; font-size: 13px; color: #38464b; }
  .c-tune { display: grid; place-items: center; width: 22px; height: 22px; margin-right: 7px; background: #f6fbfd; border-radius: 50%; }
  .c-url-icon { display: grid; place-items: center; width: 30px; color: #2f3b40; }
  .c-url-icon.first { margin-left: auto; }
  .c-ext { display: grid; grid-template-columns: 34px 33px 34px 16px 36px 30px; align-items: center; justify-items: center; margin-left: 8px; }
  .c-ext i { width: 2px; height: 14px; background: #a4ecfb; }

  .page { position: relative; flex: 1; padding: 6px 0 0 184px; }
  .course { width: 523px; border: 1px solid #4a4a4a; }
  .course-title { display: grid; place-items: center; height: 25px; padding-bottom: 1px; font: bold 14.200px 'Liberation Sans', Arial, sans-serif; color: #666; }
  .course-title em { font-style: normal; color: #0c9a3d; }
  .chapters { display: flex; align-items: center; height: 36px; padding: 0 0 1px 4px; background: #323232; border-top: 1px solid #222; font: bold 21px 'Liberation Sans', Arial, sans-serif; color: #8ef560; }
  .chapters span { width: 19.600px; text-align: center; }
  .chapters .two { width: 30px; }
  .dotted { position: absolute; left: 896px; top: 18px; width: 126px; height: 2px; background: repeating-linear-gradient(90deg, #999 0 1px, transparent 1px 4px); -webkit-mask-image: linear-gradient(90deg, #000 60%, rgba(0, 0, 0, .25)); mask-image: linear-gradient(90deg, #000 60%, rgba(0, 0, 0, .25)); }
  .next { position: absolute; left: 1089px; top: 108px; width: 70px; height: 50px; display: grid; place-items: center; padding: 0 1px 3px 0; background: #2a2a2a; border: 2px solid #cdcdcd; border-radius: 7px; color: #fff; font-size: 17.500px; }
  .slide { position: absolute; left: 1158px; top: 219px; width: 30px; height: 72px; display: grid; place-items: center; background: #2a2a2a; border-radius: 6px; }
  .notice { width: 743px; height: 190px; margin-top: 24px; padding: 10px 0 0 14px; border: 1px solid #555; border-bottom: 2px solid #8c8c8c; }
  .notice h1 { height: 42px; margin: 0 0 15px; font: bold 30.500px/42px 'Liberation Sans', Arial, sans-serif; color: #f00; }
  .notice p { height: 24.200px; margin: 0; font: 19.800px/24px Georgia, 'Liberation Serif', serif; color: #111; }
  .notice u { color: #1a1aee; }

  .t-bar { display: flex; align-items: center; height: 45px; padding-bottom: 1px; background: #eee; border-top: 1px solid #bdbdbd; }
  .t-weather { margin-left: 18px; width: 29px; }
  .t-temp { display: flex; flex-direction: column; width: 155px; font-size: 10.800px; line-height: 15px; align-items: flex-start; }
  .t-temp .soft { color: #5a5a5a; }
  .t-start { width: 37px; margin-left: 86px; }
  .t-search { display: flex; align-items: center; gap: 9px; width: 205px; height: 30px; margin-left: -1px; padding: 0 12px 0 9px; background: #fafafa; border: 1px solid #d8d8d8; border-radius: 15px; font-size: 12.500px; color: #5a5a5a; }
  .t-bake { margin-left: auto; }
  .t-apps { display: flex; margin-left: 2px; }
  .t-apps span { position: relative; display: grid; place-items: center; width: 41.250px; height: 37px; }
  .t-apps .active { background: #fafafa; border-radius: 4px; width: 35px; margin: 0 3.100px; }
  .t-apps .open::after, .t-apps .active::after { content: ''; position: absolute; left: 50%; bottom: 0; width: 6px; height: 4px; margin-left: -3px; border-radius: 2px; background: #868686; }
  .t-apps .active::after { width: 15px; margin-left: -7.500px; background: #0a78d4; }
  .t-tray { display: flex; align-items: center; margin-left: auto; padding-right: 18px; }
  .t-tray > span { display: grid; place-items: center; width: 22px; }
  .t-tray .t-up { width: 26px; margin-right: 6px; }
  .t-tray .t-clock { display: flex; flex-direction: column; align-items: flex-end; width: 65px; font-size: 11px; line-height: 15px; }
  .t-tray .t-bell { width: 28px; }
  .t-tray .t-co { width: 32px; justify-items: end; padding-right: 1px; }

  .p-foot { display: flex; align-items: center; height: 61px; margin-top: auto; padding-top: 1px; background: #272727; }
  .p-foot i { width: 2px; height: 36px; background: #3b3b3b; }
  .f-strip { width: 63px; padding-left: 18px; }
  .f-pct { margin-left: auto; padding-right: 11px; font-size: 19.500px; }
  .f-cell { display: grid; place-items: center; width: 60.300px; }
  .f-cell.dim { color: #707070; }
  .f-cell + i { margin-left: 3px; }
  .f-full { display: grid; place-items: center; width: 63px; padding-left: 3px; }

  /* Properties dialog */
  .dialog { position: absolute; left: 1329px; top: 90px; width: 545px; height: 778px; display: flex; flex-direction: column; background: #f0f0f0; border: 2px solid #a9a9a9; border-radius: 11px; background-clip: padding-box; box-shadow: 0 10px 30px rgba(0, 0, 0, .27); overflow: hidden; font: 16px 'Liberation Sans', Arial, sans-serif; color: #111; }
  .d-head { display: flex; align-items: center; gap: 9px; height: 43px; padding: 0 16px 2px 14px; background: #f3f3f3; font: 17px 'Open Sans', sans-serif; color: #8b8b8b; }
  .d-close { margin-left: auto; }
  .d-tabs { display: flex; align-items: flex-end; height: 39px; padding-left: 9px; }
  .d-tabs > span { display: grid; place-items: center; height: 26px; padding-top: 4px; background: #f2f2f2; border: 1px solid #e2e2e2; border-width: 1px 1px 0 0; }
  .d-tabs .on { z-index: 1; height: 30px; width: 81px; margin-bottom: -1px; padding: 0; background: #f9f9f9; border-width: 1px 1px 0; }
  .d-tabs .d-sec { width: 72px; }
  .d-tabs .d-det { width: 67px; }
  .d-tabs .d-prev { width: 142px; padding-left: 2px; }
  .d-panel { width: 521px; height: 636px; margin-left: 9px; padding: 0 21px; background: #f9f9f9; border: 1px solid #e3e3e3; }
  .d-file { display: flex; height: 82px; padding: 22px 0 0 7px; }
  .d-file .d-input { flex: none; width: 370px; height: 35px; margin: 8px 0 0 69px; padding: 5px 0 0 3px; line-height: 18px; background: #fff; border: 1px solid #e8e8e8; border-bottom: 1px solid #858585; border-radius: 2px; }
  .d-group { width: 476px; padding: 9px 0 10px; border-top: 1px solid #999; }
  .d-row { display: flex; align-items: center; height: 40px; padding-top: 1px; }
  .k { width: 110px; }
  .btn { display: grid; place-items: center; width: 111px; height: 34px; background: #fdfdfd; border: 1px solid #ccc; border-bottom-color: #b8b8b8; border-radius: 4px; }
  .btn.change { width: 156px; margin: 5px 0 0 auto; }
  .btn.off { color: #999; background: #f6f6f6; border-color: #e9e9e9; }
  .d-attr { display: flex; align-items: flex-start; height: 44px; }
  .d-attr .k { padding-top: 12px; }
  .check { display: flex; align-items: center; gap: 4px; height: 21px; margin-top: 12px; }
  .check i { width: 20px; height: 20px; background: #f3f3f3; border: 1px solid #6a6a6a; border-radius: 4px; }
  .check.hid { margin-left: 23px; }
  .btn.adv { margin: 6px -3px 0 auto; }
  .d-attr.sec .k { padding-top: 11px; }
  .note { display: flex; flex-direction: column; align-items: flex-start; width: 257px; padding-top: 10px; line-height: 20px; }
  .check.unblock { margin-top: 18px; }
  .d-foot { display: flex; justify-content: flex-end; gap: 10.500px; padding: 12px 9px 0 0; }

  /* Taskbar */
  .taskbar { position: absolute; left: 0; top: 1008px; width: 1920px; height: 72px; display: flex; align-items: center; padding-bottom: 2px; background: #eee; border-top: 2px solid #bcbcbc; }
  .w { position: relative; width: 396px; padding-left: 33px; }
  .w-temp { position: absolute; left: 43px; top: -9px; display: grid; place-items: center; height: 25px; min-width: 33px; background: rgba(250, 250, 250, .85); border-radius: 13px; font-size: 16px; }
  .start { width: 56px; }
  .search { display: flex; align-items: center; gap: 14px; width: 328px; height: 48px; padding: 0 23px 0 15px; background: #fafafa; border: 2px solid #dedede; border-bottom-color: #c8c8c8; border-radius: 24px; font-size: 19.500px; color: #5c5c5c; }
  .cap { margin: 0 5px 0 auto; }
  .apps { display: flex; margin-left: 4px; }
  .apps span { position: relative; display: grid; place-items: center; width: 66px; height: 58px; }
  .apps .active { width: 58px; margin: 0 4px; background: #f8f8f8; border: 1px solid #e0e0e0; border-radius: 6px; }
  .apps .open::after, .apps .active::after { content: ''; position: absolute; left: 50%; bottom: 0; width: 9px; height: 5px; margin-left: -4.500px; border-radius: 3px; background: #868686; }
  .apps .active::after { width: 24px; margin-left: -12px; bottom: -1px; background: #0a78d4; }
  .badge { position: absolute; left: 35px; top: 4px; display: grid; place-items: center; width: 24px; height: 24px; background: #0a78d4; border-radius: 50%; color: #fff; font-size: 16px; font-weight: 400; }
  .tray { display: flex; align-items: center; margin-left: auto; }
  .tray > span { display: grid; place-items: center; }
  .tray .tr-up { width: 40px; margin-right: 10px; }
  .tray .tr { width: 36px; }
  .tray .clock { display: flex; flex-direction: column; align-items: flex-end; width: 102px; font-size: 17px; line-height: 24px; }
  .tray .bell { width: 46px; }
  .tray .co { width: 79px; padding-right: 18px; }
</style>
